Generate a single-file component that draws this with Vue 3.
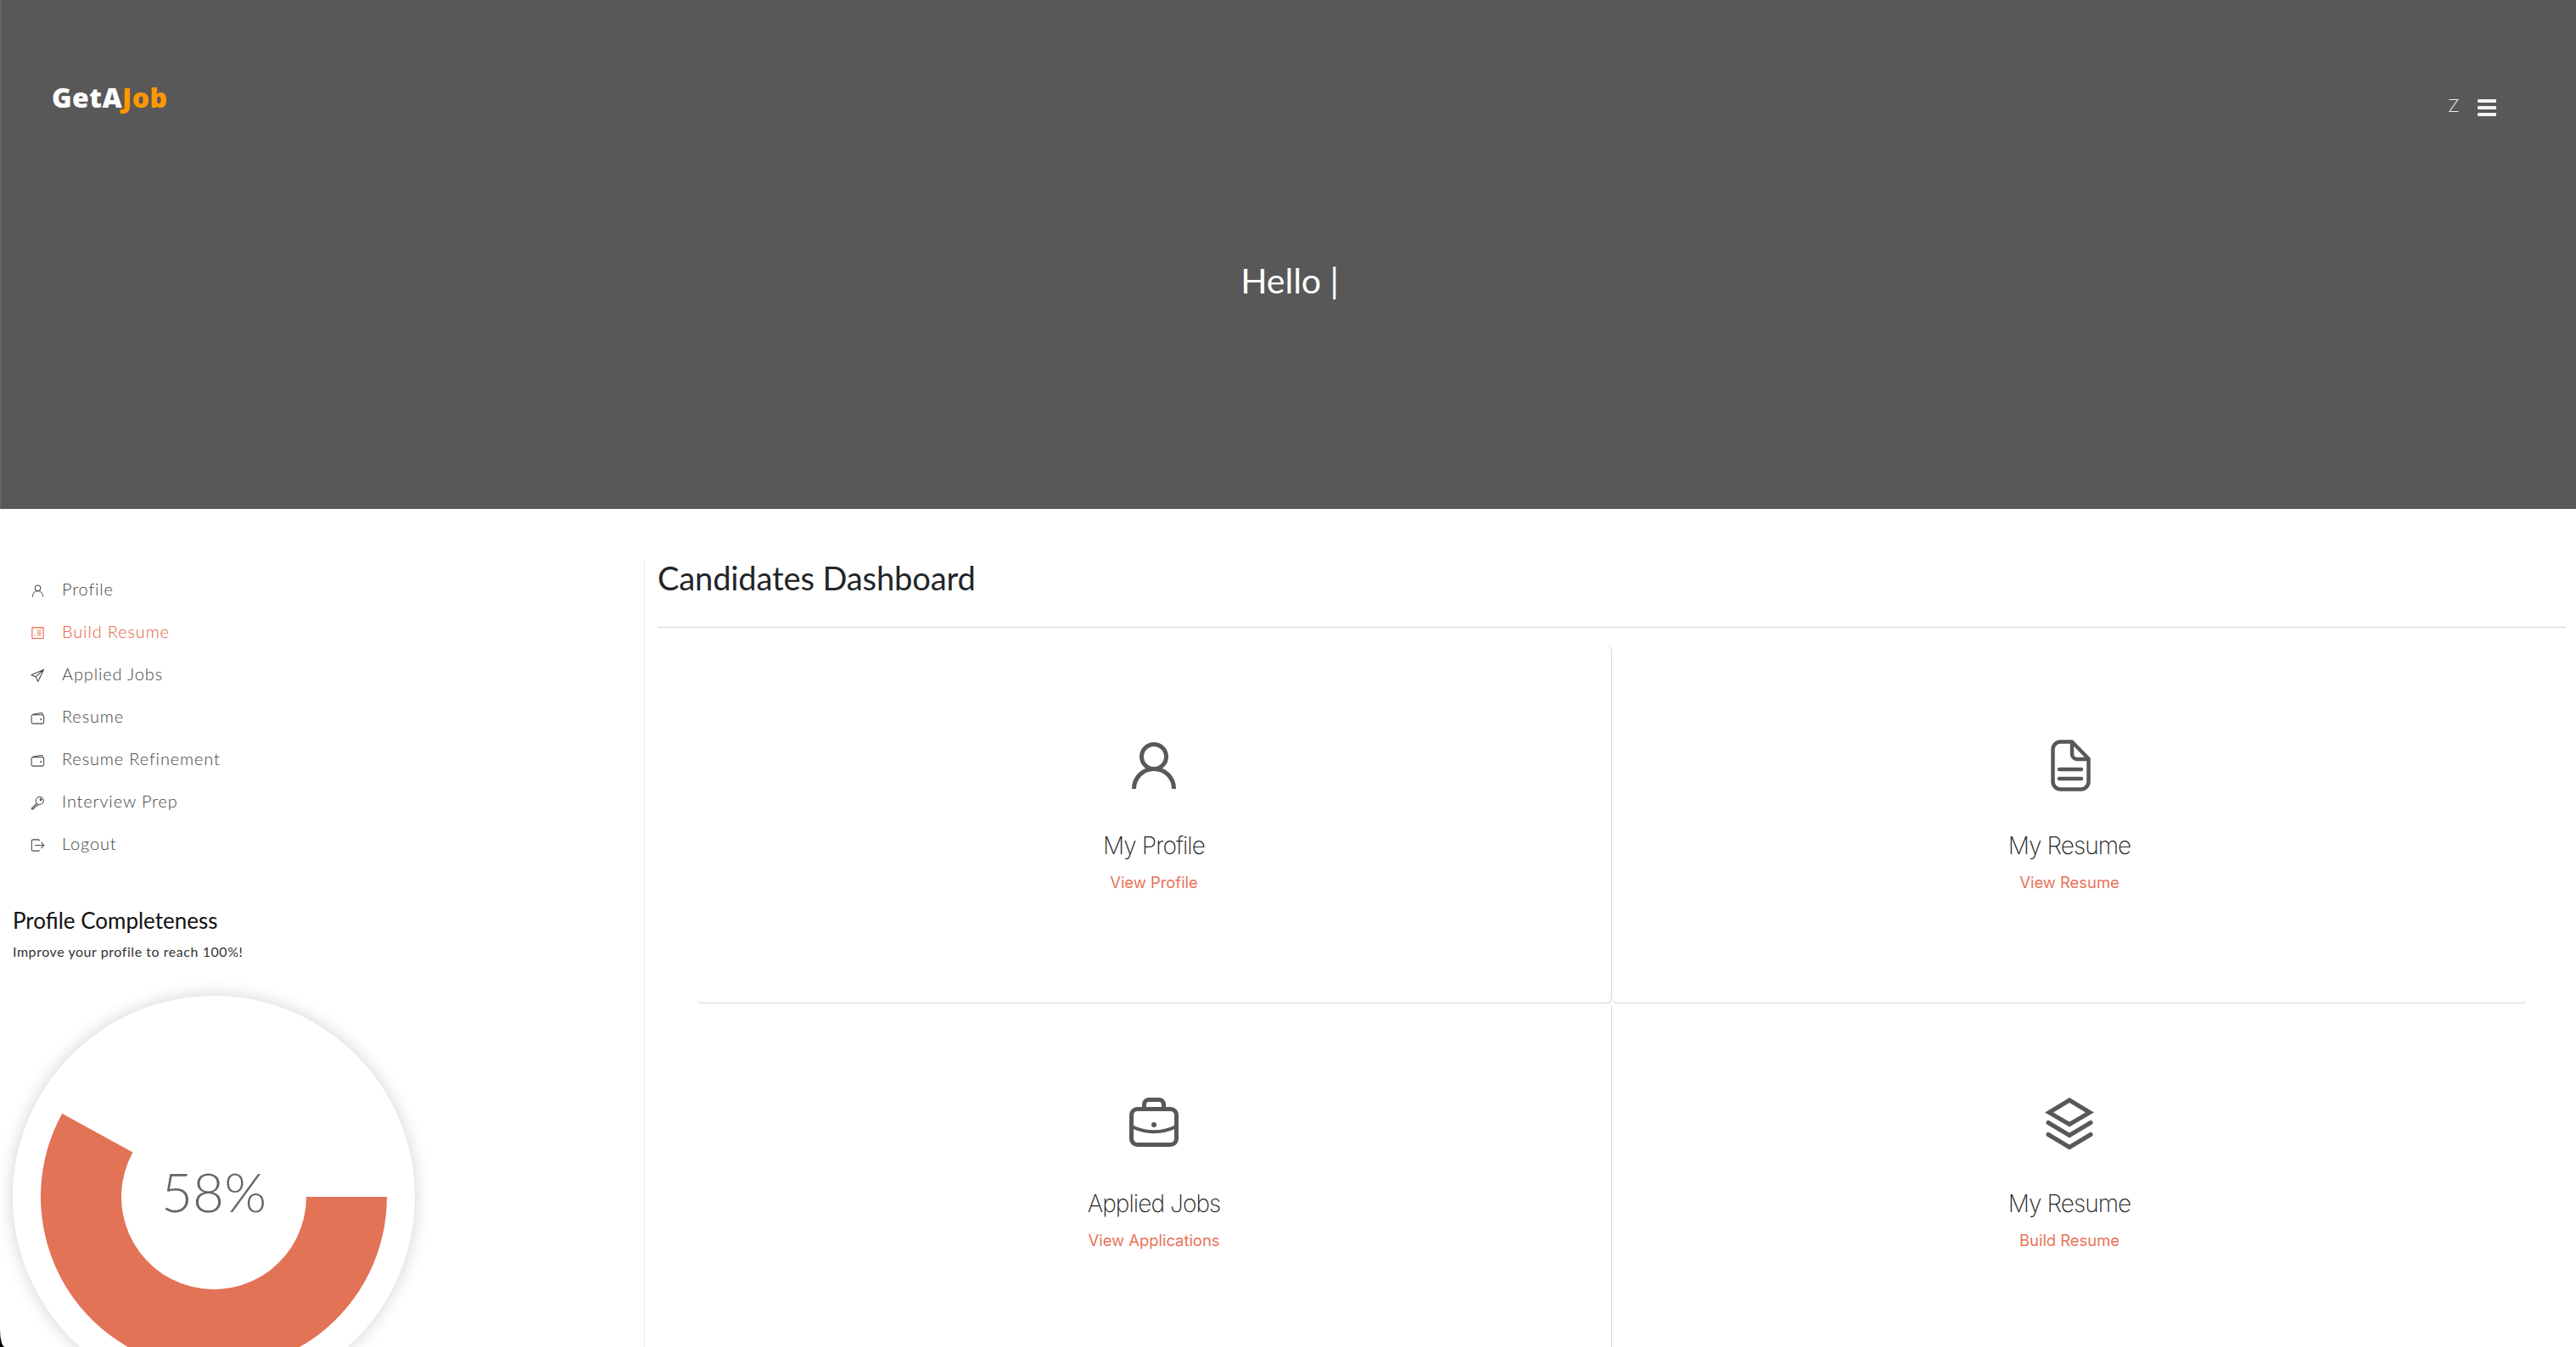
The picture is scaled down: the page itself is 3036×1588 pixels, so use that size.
<script setup>
const menu = [
  { label: 'Profile', icon: 'user' },
  { label: 'Build Resume', icon: 'doc', active: true },
  { label: 'Applied Jobs', icon: 'send' },
  { label: 'Resume', icon: 'wallet' },
  { label: 'Resume Refinement', icon: 'wallet' },
  { label: 'Interview Prep', icon: 'key' },
  { label: 'Logout', icon: 'logout' },
]
const cards = [
  { title: 'My Profile', link: 'View Profile', icon: 'user' },
  { title: 'My Resume', link: 'View Resume', icon: 'file' },
  { title: 'Applied Jobs', link: 'View Applications', icon: 'case' },
  { title: 'My Resume', link: 'Build Resume', icon: 'layers' },
]
</script>

<template>
  <div class="page">
    <header class="hero">
      <div class="topbar">
        <div class="logo">GetA<span>Job</span></div>
        <div class="tools">
          <span class="initial">Z</span>
          <span class="burger"><i></i><i></i><i></i></span>
        </div>
      </div>
      <div class="hello">Hello |</div>
    </header>

    <div class="content">
      <aside class="side">
        <nav class="menu">
          <a v-for="m in menu" :key="m.label" class="item" :class="{ active: m.active }">
            <svg class="mi" viewBox="0 0 18 18" fill="none" stroke="currentColor" stroke-width="1.1" stroke-linecap="round" stroke-linejoin="round">
              <template v-if="m.icon === 'user'">
                <circle cx="9" cy="5.6" r="3.5" />
                <path d="M2.6 16c0-4 2.6-6.7 6.4-6.7s6.4 2.7 6.4 6.7" />
              </template>
              <template v-else-if="m.icon === 'doc'">
                <rect x="2" y="2" width="14" height="13.4" />
                <path d="M8.6 6h4.4M8.6 8.7h4.4M8.6 11.4h4.4M5.2 11.4h.6" />
              </template>
              <template v-else-if="m.icon === 'send'">
                <path d="M16.5 1.5 1 8.2l5.6 2.3 2.6 6 7.3-15ZM6.6 10.500l9.900-9" />
              </template>
              <template v-else-if="m.icon === 'wallet'">
                <path d="M3 4.600 13 2.600c1.200-.2 2 .4 2 1.600v1M1.200 7c0-1.200.8-2 2-2h11.400c1.100 0 2 .8 2 2v7c0 1.200-.9 2-2 2H3.200c-1.200 0-2-.8-2-2V7Z" />
                <circle cx="13" cy="10.600" r=".5" fill="currentColor" />
              </template>
              <template v-else-if="m.icon === 'key'">
                <circle cx="11.400" cy="6.400" r="4.800" />
                <circle cx="12.800" cy="5" r="1" fill="currentColor" />
                <path d="M8 9.800 1.600 15.400v1.400h2.200l.6-1.800 1.600-.4.400-1.600 1.600-.2 1.400-1.400" />
              </template>
              <template v-else>
                <path d="M10.800 3.200V3c0-.6-.5-1-1-1H3.200c-1 0-1.800.8-1.800 1.800v10.400c0 1 .8 1.800 1.800 1.800h6.600c.6 0 1-.4 1-1" />
                <path d="M6 9h10.800M13.600 5.600 16.800 9l-3.200 3.400" />
              </template>
            </svg>
            <span>{{ m.label }}</span>
          </a>
        </nav>

        <h3 class="pc-title">Profile Completeness</h3>
        <p class="pc-sub">Improve your profile to reach 100%!</p>

        <div class="gauge">
          <svg viewBox="0 0 474 474" width="474" height="474">
            <path fill="#e27357" d="M441 237A204 204 0 1 1 58.200 138.700L141.500 184.500A109 109 0 1 0 346 237Z" />
          </svg>
          <span class="pct">58%</span>
        </div>
      </aside>

      <main class="main">
        <h2 class="dash-title">Candidates Dashboard</h2>
        <div class="grid">
          <section v-for="(c, i) in cards" :key="i" class="card" :class="'c' + i">
            <svg class="ci" viewBox="0 0 60 60" fill="none" stroke="#585858" stroke-width="5" stroke-linecap="round" stroke-linejoin="round">
              <template v-if="c.icon === 'user'">
                <circle cx="30" cy="19" r="14.500" />
                <path stroke-linecap="butt" d="M6.500 57c0-13 10-23.500 23.500-23.500S53.500 44 53.500 57" />
              </template>
              <template v-else-if="c.icon === 'file'">
                <path stroke-width="4.500" d="M19.500 1.500H33L52.500 21.500V48.500a9 9 0 0 1-9 9H19.500a9 9 0 0 1-9-9V10.500a9 9 0 0 1 9-9Z" />
                <path stroke-width="4.500" d="M33 2V16a6 6 0 0 0 6 6H52M18 34H44M18 45H44" />
              </template>
              <template v-else-if="c.icon === 'case'">
                <rect x="3.500" y="12.500" width="53" height="42" rx="7" />
                <path d="M18.500 12.500V7c0-3 2.500-5.500 5.500-5.500h12c3 0 5.500 2.500 5.500 5.500v5.500" />
                <path stroke-width="4" d="M3.500 33c17 8 36 8 53 0" />
                <circle cx="30" cy="31" r="3" fill="#585858" stroke="none" />
              </template>
              <template v-else>
                <path stroke-linejoin="miter" d="M30 2 54 16.500 30 30.500 6 16.500 30 2Z" />
                <path stroke-linejoin="miter" d="M5 28.500 30 43.500 55 28.500M5 42.500 30 57.500 55 42.500" />
              </template>
            </svg>
            <h4 class="ct">{{ c.title }}</h4>
            <a class="cl">{{ c.link }}</a>
          </section>
        </div>
      </main>
    </div>
  </div>
</template>

<style>
html, body { margin: 0; background: #000; overflow: hidden; }
</style>

<style scoped>
.page {
  width: 3036px;
  height: 1588px;
  overflow: hidden;
  background: #fff;
  border-bottom-left-radius: 6px 20px;
  font-family: "Lato", "Open Sans", sans-serif;
}
.hero {
  height: 600px;
  box-sizing: border-box;
  background: #585858;
  border-left: 1px solid #686868;
  display: flex;
  flex-direction: column;
}
.topbar {
  display: flex;
  justify-content: space-between;
  padding: 94px 94px 0 60px;
  height: 198px;
  box-sizing: border-box;
}
.logo {
  font-family: "Open Sans", sans-serif;
  font-weight: 800;
  font-size: 32px;
  line-height: 42px;
  color: #fff;
  letter-spacing: 0.4px;
}
.logo span { color: #ff9800; }
.tools { display: flex; align-items: flex-start; gap: 22px; padding-top: 10px; }
.initial {
  font-family: "Lato", sans-serif;
  font-weight: 300;
  font-size: 21px;
  line-height: 28px;
  color: #f0f0f0;
  margin-top: 6px;
}
.burger { display: flex; flex-direction: column; gap: 4px; width: 22px; padding-top: 13px; }
.burger i { display: block; height: 4px; background: #f2f2f2; border-radius: 1px; }
.hello {
  text-align: center;
  color: #fff;
  font-size: 41px;
  line-height: 56px;
  margin-top: 105px;
  padding-left: 3px;
}
.content { display: flex; height: 988px; }
.side {
  width: 759px;
  flex: none;
  box-sizing: border-box;
  padding: 69px 0 0 15px;
  position: relative;
}
.menu { display: flex; flex-direction: column; margin-left: 21px; }
.item {
  height: 50px;
  display: flex;
  align-items: center;
  gap: 20px;
  font-size: 20px;
  font-weight: 300;
  color: #444;
  letter-spacing: 0.85px;
}
.item.active { color: #e5603f; }
.mi { width: 17px; height: 17px; margin-top: 4px; flex: none; }
.pc-title {
  margin: 50px 0 0;
  font-size: 26px;
  line-height: 32px;
  font-weight: 400;
  color: #111;
}
.pc-sub {
  margin: 10px 0 0;
  font-size: 16px;
  font-weight: 400;
  letter-spacing: 0.55px;
  line-height: 22px;
  color: #333;
}
.gauge {
  position: relative;
  width: 474px;
  height: 474px;
  margin-top: 41px;
  border-radius: 50%;
  background: #fff;
  box-shadow: 0 0 20px rgba(0, 0, 0, 0.18);
}
.gauge svg { display: block; }
.pct {
  position: absolute;
  left: 0;
  right: 0;
  top: 193px;
  text-align: center;
  font-size: 64px;
  line-height: 76px;
  font-weight: 300;
  color: #666;
}
.main {
  flex: 1;
  border-left: 1px solid #e8e8e8;
  margin-top: 60px;
  padding: 0 12px 0 15px;
  min-width: 0;
}
.dash-title {
  margin: 0;
  height: 80px;
  box-sizing: border-box;
  border-bottom: 1px solid #d4d4d4;
  font-size: 38px;
  line-height: 42px;
  font-weight: 400;
  letter-spacing: -0.1px;
  color: #212529;
}
.grid {
  display: grid;
  grid-template-columns: 1079px 1078px;
  grid-auto-rows: 422px;
  margin: 21px 0 0 46px;
}
.card {
  display: flex;
  flex-direction: column;
  align-items: center;
  padding-top: 112px;
  box-sizing: border-box;
  border-radius: 6px;
}
.c0 { border-right: 1px solid #d4d4d4; border-bottom: 1px solid #d4d4d4; }
.c1 { border-bottom: 1px solid #d4d4d4; }
.c2 { border-right: 1px solid #d4d4d4; }
.ci { width: 60px; height: 60px; flex: none; overflow: visible; }
.ct {
  margin: 42px 0 0;
  font-family: "Inter", sans-serif;
  font-weight: 200;
  font-size: 28px;
  letter-spacing: -0.9px;
  line-height: 44px;
  color: #222;
}
.cl {
  margin-top: 1px;
  font-family: "Inter", sans-serif;
  font-size: 18.4px;
  line-height: 40px;
  color: #e8735a;
}
</style>
